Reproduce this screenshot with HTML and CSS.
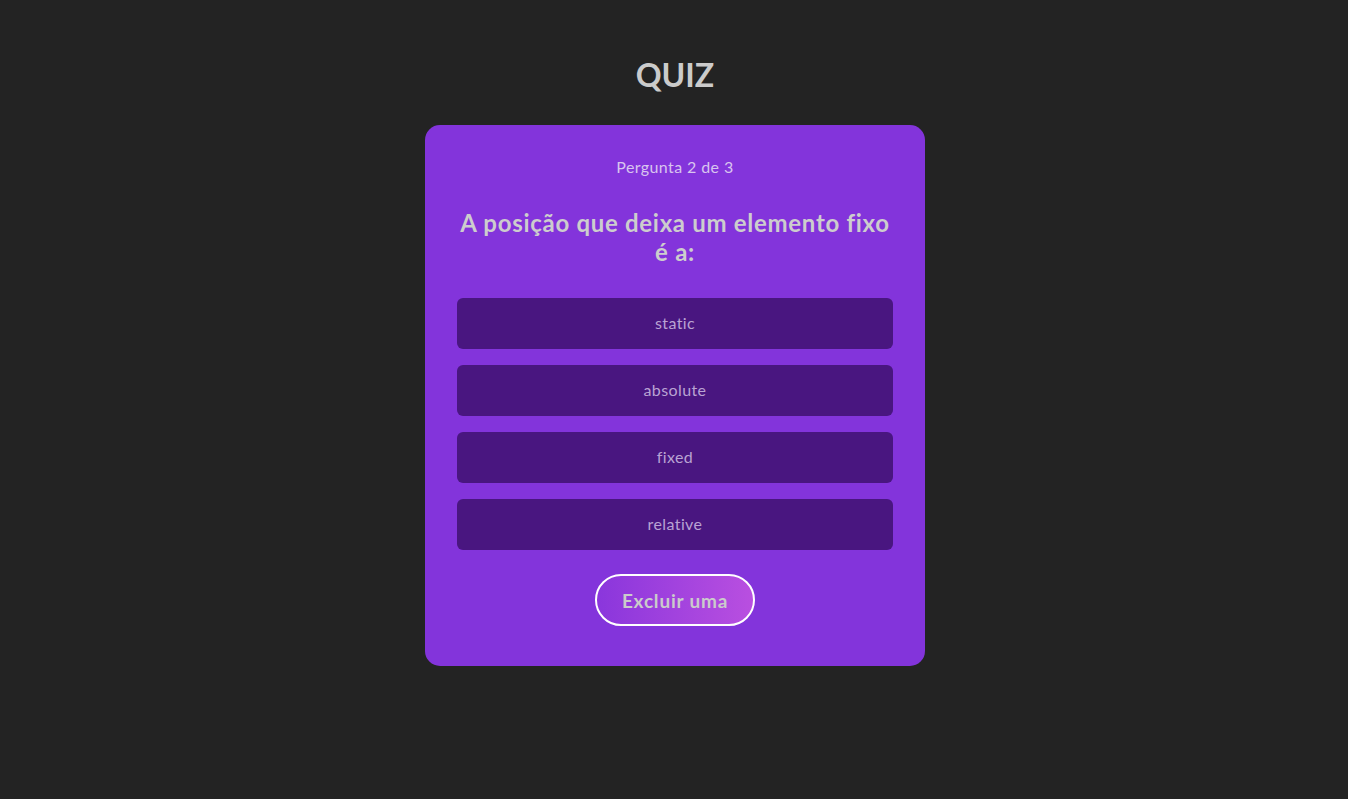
FILE: index.html
```html
<!DOCTYPE html>
<html lang="pt-BR">
<head>
<meta charset="utf-8">
<title>Quiz</title>
<link rel="stylesheet" href="styles.css">
</head>
<body>
  <main class="page">
    <h1 class="title">QUIZ</h1>
    <section class="card">
      <p class="counter">Pergunta 2 de 3</p>
      <h2 class="question">A posição que deixa um elemento fixo é a:</h2>
      <div class="options">
        <button class="option">static</button>
        <button class="option">absolute</button>
        <button class="option">fixed</button>
        <button class="option">relative</button>
      </div>
      <button class="remove">Excluir uma</button>
    </section>
  </main>
</body>
</html>
```

FILE: styles.css
```css
* { box-sizing: border-box; }
html, body { margin: 0; padding: 0; }
body {
  background: #232323;
  font-family: "Lato", "Open Sans", sans-serif;
  color: #cfcfcf;
  min-height: 799px;
}
.page {
  display: flex;
  flex-direction: column;
  align-items: center;
  padding-top: 55px;
  padding-left: 2px;
}
.title {
  margin: 0;
  font-size: 32px;
  line-height: 40px;
  font-weight: 700;
  color: #cbcbcb;
}
.card {
  margin-top: 30px;
  width: 500px;
  background: #8334db;
  border-radius: 15px;
  padding: 32px 32px 40px;
  display: flex;
  flex-direction: column;
  align-items: center;
}
.counter {
  margin: 0;
  font-size: 16px;
  line-height: 19px;
  letter-spacing: 0.4px;
  color: #d8c4ef;
}
.question {
  margin: 32px 0 0;
  font-size: 24px;
  line-height: 29px;
  font-weight: 700;
  text-align: center;
  color: #cdcdcd;
  letter-spacing: 0.7px;
}
.options {
  margin-top: 32px;
  width: 100%;
  display: flex;
  flex-direction: column;
  gap: 16px;
}
.option {
  height: 51px;
  width: 100%;
  border: none;
  border-radius: 6px;
  background: #491680;
  color: #b9a3d3;
  font-family: inherit;
  font-size: 16px;
  letter-spacing: 0.4px;
  padding: 0 0 2px;
  cursor: pointer;
}
.remove {
  margin-top: 24px;
  width: 160px;
  height: 52px;
  border: 2px solid #ffffff;
  border-radius: 26px;
  background: linear-gradient(90deg, #8a36dc 0%, #b94fe0 100%);
  color: #cbcbcb;
  font-family: inherit;
  font-size: 19px;
  font-weight: 700;
  letter-spacing: 0.8px;
  cursor: pointer;
}
```
